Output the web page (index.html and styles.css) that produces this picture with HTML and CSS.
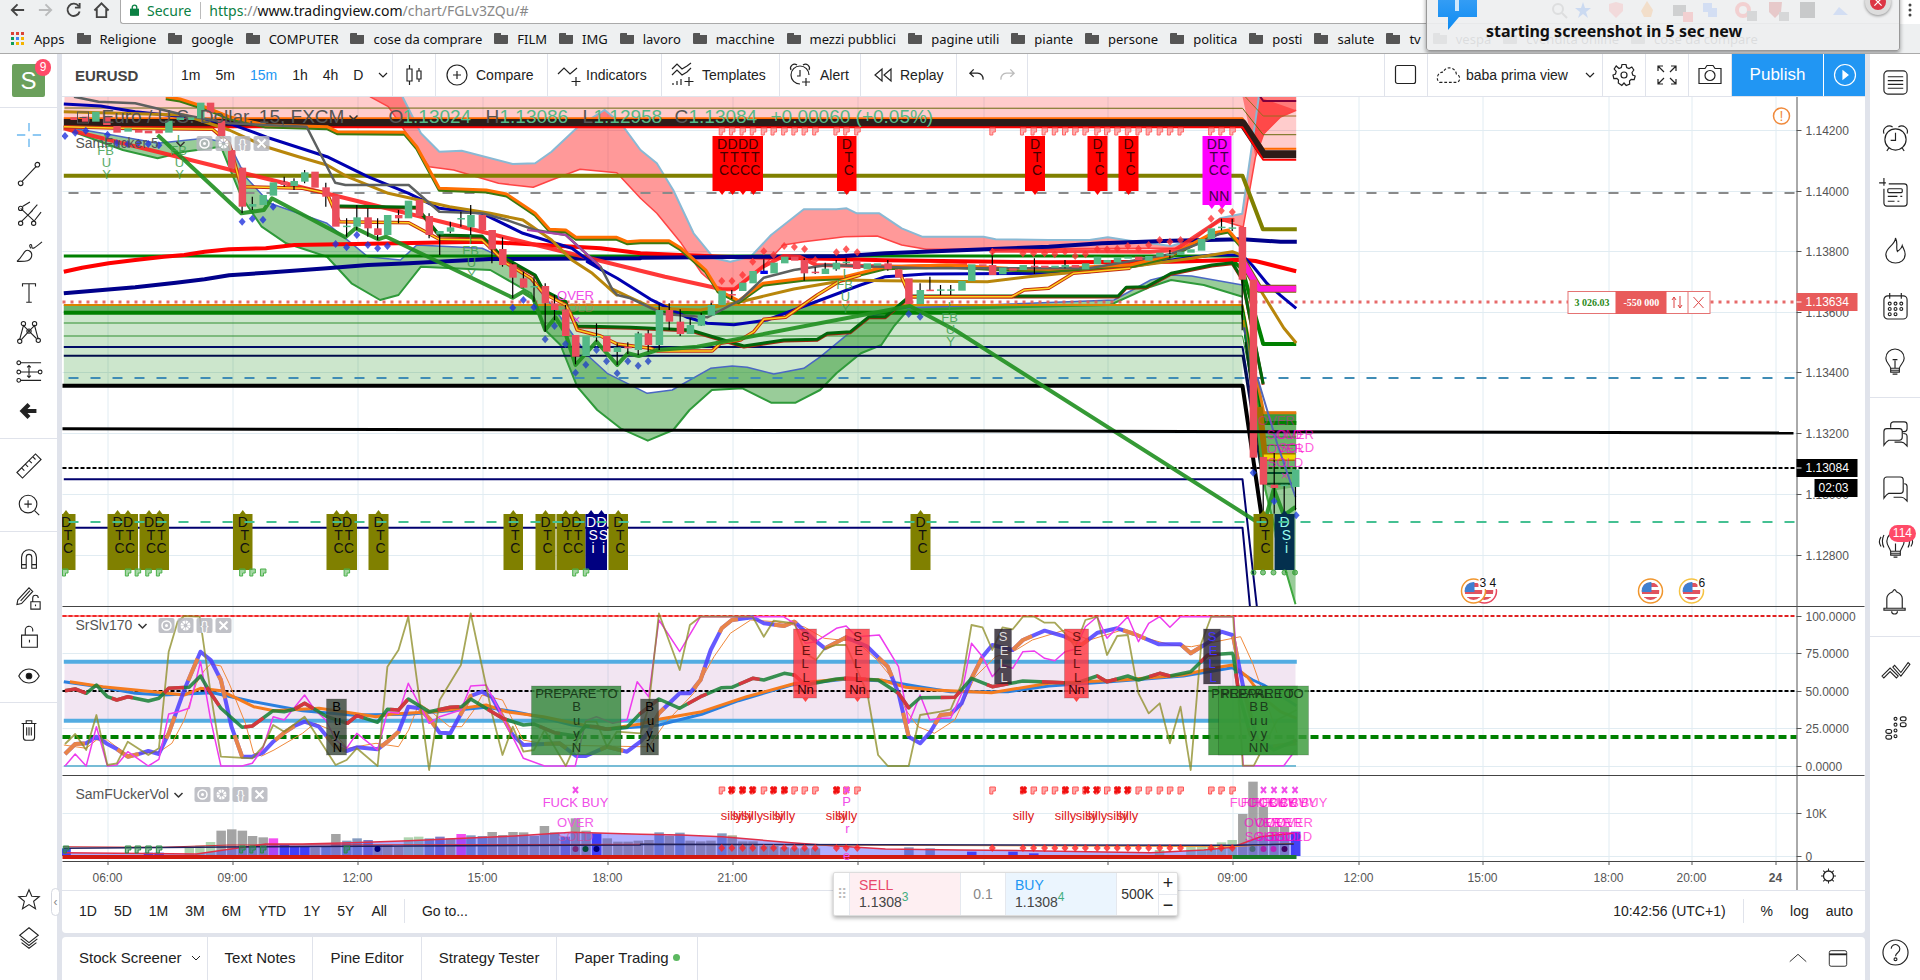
FILE: index.html
```html
<!DOCTYPE html>
<html lang="en">
<head>
<meta charset="utf-8">
<title>EURUSD - TradingView</title>
<link rel="stylesheet" href="styles.css">
</head>
<body>
<div class="app">
  <header class="browser">
    <div class="address-row">
      <nav class="nav-icons" aria-label="Browser">
        <button aria-label="Back"><svg viewBox="0 0 18 18"><path d="M16 9H3M9 3L3 9l6 6"/></svg></button>
        <button aria-label="Forward" class="dim"><svg viewBox="0 0 18 18"><path d="M2 9h13M9 3l6 6-6 6"/></svg></button>
        <button aria-label="Reload"><svg viewBox="0 0 18 18"><path d="M14.500 5A6.500 6.500 0 1 0 15.500 10.500M15.500 1.500V6.500H10.500"/></svg></button>
        <button aria-label="Home"><svg viewBox="0 0 18 18"><path d="M1.500 9.500L9 2l7.500 7.500M4 8v8.500h10V8"/></svg></button>
      </nav>
      <div class="address">
        <svg class="lock" viewBox="0 0 10 13"><path d="M0 5h10v8H0z" fill="#0b8043"/><path d="M2.500 6V3.500a2.500 2.500 0 0 1 5 0V6" fill="none" stroke="#0b8043" stroke-width="1.500"/></svg>
        <span class="secure">Secure</span>
        <a class="url" href="#"><span class="green">https</span>://<b>www.tradingview.com</b>/chart/FGLv3ZQu/#</a>
      </div>
      <span class="more"><svg viewBox="0 0 4 16"><circle cx="2" cy="2" r="1.500"/><circle cx="2" cy="7" r="1.500"/><circle cx="2" cy="12" r="1.500"/></svg></span>
    </div>
    <nav class="bookmarks" aria-label="Bookmarks">
      <a href="#"><svg class="apps" viewBox="0 0 14 14"><path fill="#db4437" d="M0 0h3v3H0zM5 0h3v3H5zM10 0h3v3h-3z"/><path fill="#0f9d58" d="M0 5h3v3H0zM0 10h3v3H0z"/><path fill="#4285f4" d="M5 5h3v3H5z"/><path fill="#f4b400" d="M10 5h3v3h-3zM5 10h3v3H5zM10 10h3v3h-3z"/></svg>Apps</a>
      <a href="#"><i class="folder"></i>Religione</a>
      <a href="#"><i class="folder"></i>google</a>
      <a href="#"><i class="folder"></i>COMPUTER</a>
      <a href="#"><i class="folder"></i>cose da comprare</a>
      <a href="#"><i class="folder"></i>FILM</a>
      <a href="#"><i class="folder"></i>IMG</a>
      <a href="#"><i class="folder"></i>lavoro</a>
      <a href="#"><i class="folder"></i>macchine</a>
      <a href="#"><i class="folder"></i>mezzi pubblici</a>
      <a href="#"><i class="folder"></i>pagine utili</a>
      <a href="#"><i class="folder"></i>piante</a>
      <a href="#"><i class="folder"></i>persone</a>
      <a href="#"><i class="folder"></i>politica</a>
      <a href="#"><i class="folder"></i>posti</a>
      <a href="#"><i class="folder"></i>salute</a>
      <a href="#"><i class="folder"></i>tv</a>
      <a href="#"><i class="folder"></i>vespa</a>
      <a href="#"><i class="folder"></i>cvendita online</a>
      <a href="#"><i class="folder"></i>cose da compare</a>
    </nav>
    <aside class="notice">
      <svg class="bubble" viewBox="0 0 40 36"><defs><linearGradient id="bub" x1="0" y1="0" x2="0" y2="1"><stop offset="0" stop-color="#3ba0f5"/><stop offset="1" stop-color="#0d8bf2"/></linearGradient></defs><path d="M0 0H39V23H21L10 36V23H0Z" fill="url(#bub)"/><path d="M17 3h4v14h-4z" fill="#cfe8fc"/></svg>
      <strong>starting screenshot in 5 sec new</strong>
      <svg class="ext" viewBox="0 0 300 22"><g fill="none" stroke-width="2"><circle cx="7" cy="8" r="5" stroke="#999"/><path d="M11 12l5 5" stroke="#999"/></g><path d="M32 1l2 6h6l-5 4 2 6-5-4-5 4 2-6-5-4h6z" fill="#4285f4"/><path d="M58 3l7-2 7 2v7l-7 7-7-7z" fill="#f88"/><path d="M96 0l6 9-2 7h-7l-3-6z" fill="#f93"/><path d="M122 4h13v11h-13z" fill="#555"/><path d="M132 11h10v10h-10z" fill="#f55"/><path d="M152 2h9v9h-9zM157 7h9v9h-9z" fill="#69f"/><circle cx="192" cy="9" r="6" fill="none" stroke="#f55" stroke-width="4"/><path d="M196 10h10v10h-10z" fill="#777"/><path d="M218 1h13l-1 10-6 6-6-6z" fill="#c33"/><path d="M228 11h10v9h-10z" fill="#777"/><path d="M249 1h15v16h-15z" fill="#333"/><path d="M282 14l6-8 9 8z" fill="#69f"/></svg>
      <button class="close" aria-label="Close notification"><svg viewBox="0 0 10 10"><path d="M2 2l6 6M8 2l-6 6"/></svg></button>
    </aside>
  </header>

  <div class="workspace">
    <aside class="tools left">
      <div class="account"><button class="avatar">S</button><span class="badge">9</span></div>
      <div class="group main-tools">
        <button aria-label="Cross" class="cross"><svg viewBox="0 0 28 28"><path d="M14 1v9M14 18v9M1 14h9M18 14h9"/></svg></button>
        <button aria-label="Trend line"><svg viewBox="0 0 28 28"><path d="M6.500 22L21.500 6"/><circle cx="5" cy="24" r="2.500"/><circle cx="23" cy="4" r="2.500"/></svg></button>
        <button aria-label="Pitchfork"><svg viewBox="0 0 28 28"><path d="M5 8L20 22M7 6L15 1M6 22L18 10M20 21l7-9M14 14l9-10"/><circle cx="5" cy="8" r="2.300"/><circle cx="5" cy="24" r="2.300"/><circle cx="19" cy="24" r="2.300"/></svg></button>
        <button aria-label="Brush"><svg viewBox="0 0 28 28"><path d="M1 23C8 23 17 24 17 16C17 12 12 9 9 13C7 16 5 20 1 23M16 9c-3-4 1-6 1-2c0 4 4 1 11-5"/></svg></button>
        <button aria-label="Text"><svg viewBox="0 0 28 28"><path d="M7 7V4H21V7M14 4V24M11 24H17"/></svg></button>
        <button aria-label="Pattern"><svg viewBox="0 0 28 28"><path d="M4 22L8 7L14 13L20 7L24 22M14 13L6 22M14 13l8 8"/><circle cx="8" cy="5" r="2.300"/><circle cx="20" cy="5" r="2.300"/><circle cx="14" cy="13" r="2.300"/><circle cx="4" cy="24" r="2.300"/><circle cx="24" cy="23" r="2.300"/></svg></button>
        <button aria-label="Prediction"><svg viewBox="0 0 28 28"><path d="M5 4H27M5 14H24M5 23H27M14 7V20M12 9l2-2 2 2M12 18l2 2 2-2"/><circle cx="3" cy="4" r="2"/><circle cx="3" cy="14" r="2"/><circle cx="26" cy="14" r="2"/><circle cx="3" cy="23" r="2"/></svg></button>
        <button aria-label="Back"><svg viewBox="0 0 28 28"><path d="M22 14H8M14 7l-7 7 7 7" stroke-width="4.500"/></svg></button>
      </div>
      <div class="group">
        <button aria-label="Measure"><svg viewBox="0 0 28 28"><path d="M1 21L21 1l6 6L7 27ZM6 16l3 3M10 12l3 3M14 8l3 3M18 4l3 3"/></svg></button>
        <button aria-label="Zoom in"><svg viewBox="0 0 28 28"><circle cx="13" cy="13" r="9.500"/><path d="M20 20l5 5M13 9v8M9 13h8"/></svg></button>
      </div>
      <div class="group">
        <button aria-label="Magnet"><svg viewBox="0 0 28 28"><path d="M6 24V12a8 8 0 0 1 16 0V24H17V12a3 3 0 0 0-6 0V24ZM6 20h5M17 20h5"/></svg></button>
        <button aria-label="Stay in drawing mode"><svg viewBox="0 0 28 28"><path d="M2 16L14 3l4 4L6 20l-5 1ZM5 17L15 6M16 18h10v8H16ZM18 18v-4a3 3 0 0 1 6 0M21 21v2"/></svg></button>
        <button aria-label="Lock drawings"><svg viewBox="0 0 28 28"><path d="M6 12H23V25H6ZM10 12V7a4 4 0 0 1 8-1V8M14.500 17v3"/></svg></button>
        <button aria-label="Hide drawings"><svg viewBox="0 0 28 28"><path d="M3 14C8 4 20 4 25 14C20 24 8 24 3 14Z"/><circle cx="14" cy="14" r="3" fill="#111"/></svg></button>
      </div>
      <div class="group last">
        <button aria-label="Remove"><svg viewBox="0 0 28 28"><path d="M6 7H22M11 7V4h6v3M8 7V22a3 3 0 0 0 3 3h6a3 3 0 0 0 3-3V7M11.500 11v9M14 11v9M16.500 11v9"/></svg></button>
      </div>
      <div class="group bottom-tools">
        <button aria-label="Favorites"><svg viewBox="0 0 28 28"><path d="M14 4l3 7 8 .5-6 5 2 8-7-4.500-7 4.500 2-8-6-5 8-.5Z"/></svg></button>
        <button aria-label="Object tree"><svg viewBox="0 0 28 28"><path d="M14 3l10 8-10 8L4 11ZM5 15l9 7 9-7M6 19l8 6 8-6"/></svg></button>
      </div>
      <button class="handle" aria-label="Collapse toolbar">‹</button>
    </aside>

    <main class="center">
      <div class="topbar">
        <button class="cell symbol">EURUSD</button>
        <div class="cell intervals">
          <button>1m</button><button>5m</button><button class="active">15m</button><button>1h</button><button>4h</button><button>D</button>
          <button class="chev" aria-label="More intervals"><svg viewBox="0 0 10 6"><path d="M1 1l4 4 4-4"/></svg></button>
        </div>
        <button class="cell style" aria-label="Chart type"><svg viewBox="0 0 18 24"><path d="M2 6h5v12H2ZM4.500 2v4M4.500 18v4M12 8h4v8h-4ZM14 5v3M14 16v3"/></svg></button>
        <button class="cell compare"><svg viewBox="0 0 24 24"><circle cx="12" cy="12" r="10"/><path d="M12 8v8M8 12h8"/></svg>Compare</button>
        <button class="cell indicators"><svg viewBox="0 0 24 24"><path d="M1 11l6-6 6 6 7-6M19 14v9M14.500 18.500h9"/></svg>Indicators</button>
        <button class="cell templates"><svg viewBox="0 0 24 24"><path d="M1 6l5-5 5 5 5-3 4-3M1 12l5-5 5 5 5-3 4-4M2 22v-2M6 22v-4M10 22v-6M18 14v9M13.500 18.500h9"/></svg>Templates</button>
        <button class="cell alert"><svg viewBox="0 0 24 24"><path d="M20 12a9 9 0 1 0-9 9M11 7v6H8M17 15v8M13 19h8M2 7a4 4 0 0 1 6-5M14 2a4 4 0 0 1 6 5"/></svg>Alert</button>
        <button class="cell replay"><svg viewBox="0 0 20 20"><path d="M9 4v12L2 10ZM18 4v12l-7-6Z"/></svg>Replay</button>
        <div class="cell history">
          <button aria-label="Undo"><svg viewBox="0 0 16 16"><path d="M5 2L1 6l4 4M1 6h8a6 6 0 0 1 6 7"/></svg></button>
          <button aria-label="Redo" class="dim"><svg viewBox="0 0 16 16"><path d="M11 2l4 4-4 4M15 6H7a6 6 0 0 0-6 7"/></svg></button>
        </div>
        <span class="grow"></span>
        <button class="cell square" aria-label="Layout"><svg viewBox="0 0 24 24"><rect x="1.500" y="2.500" width="20" height="18" rx="2"/></svg></button>
        <button class="cell saved"><svg viewBox="0 0 28 24"><path d="M5 20H24C28 18 27 12 23 11C22 3 11 2 9 9C3 8 0 17 5 20Z" stroke-dasharray="3 2"/></svg><span>baba prima view</span><svg class="chevron" viewBox="0 0 10 6"><path d="M1 1l4 4 4-4"/></svg></button>
        <button class="cell square" aria-label="Settings"><svg viewBox="0 0 24 24"><circle cx="12" cy="12" r="3"/><path d="M10 1.500h4l.7 3 2.300 1 2.800-1.500 2 3-1.800 2.500.7 2.500 2.500 1-1 3.500-3-.2-1.700 1.700.2 3-3.500 1.500-2.200-2.500-2.200 2.500L6.300 20l.2-3-1.700-1.700-3 .2-.8-3.500 2.500-1L4.200 8.500 2.200 6l2-3L7 5.500l2.300-1Z"/></svg></button>
        <button class="cell square" aria-label="Fullscreen"><svg viewBox="0 0 24 24"><path d="M3 8V3h5M3 3l6 6M16 3h5v5M21 3l-6 6M3 16v5h5M3 21l6-6M21 16v5h-5M21 21l-6-6"/></svg></button>
        <button class="cell square" aria-label="Snapshot"><svg viewBox="0 0 24 24"><path d="M1 5.500h6l2-3h6l2 3h6v15H1Z"/><circle cx="12" cy="12.500" r="5"/></svg></button>
        <button class="publish">Publish</button>
        <button class="play" aria-label="Start streaming"><svg viewBox="0 0 24 24"><circle cx="12" cy="12" r="10.500"/><path d="M10 8l5 4-5 4Z" fill="#fff"/></svg></button>
      </div>

      <div class="chart"><svg id="chart" viewBox="62 97 1802 793" role="img" aria-label="EURUSD 15 minute chart"></svg></div>

      <div class="rangebar">
        <button>1D</button><button>5D</button><button>1M</button><button>3M</button><button>6M</button><button>YTD</button><button>1Y</button><button>5Y</button><button>All</button>
        <i class="rule"></i><button class="goto">Go to...</button>
        <span class="grow"></span>
        <button>10:42:56 (UTC+1)</button><i class="rule"></i><button>%</button><button>log</button><button>auto</button>
        <div class="order">
          <span class="drag">⠿</span>
          <button class="sell"><b>SELL</b><span>1.1308<sup>3</sup></span></button>
          <span class="spread">0.1</span>
          <button class="buy"><b>BUY</b><span>1.1308<sup>4</sup></span></button>
          <span class="qty">500K</span>
          <span class="steps"><button aria-label="Increase">+</button><button aria-label="Decrease">−</button></span>
        </div>
      </div>

      <div class="tabs">
        <button>Stock Screener<svg class="chevron" viewBox="0 0 10 6"><path d="M1 1l4 4 4-4"/></svg></button><button>Text Notes</button><button>Pine Editor</button><button>Strategy Tester</button><button>Paper Trading<i class="dot"></i></button>
        <span class="grow"></span>
        <button class="icon" aria-label="Expand"><svg viewBox="0 0 24 24"><path d="M3 16l9-8 9 8"/></svg></button>
        <button class="icon" aria-label="Maximize"><svg viewBox="0 0 24 24"><rect x="2.500" y="4" width="19" height="17" rx="2"/><path d="M2.500 8h19" stroke-width="2"/></svg></button>
      </div>
    </main>

    <aside class="tools right">
      <div class="group first">
        <button aria-label="Watchlist"><svg viewBox="0 0 28 28"><rect x="2" y="2" width="24" height="24" rx="4"/><path d="M6 8h16M6 12h16M6 16h16M6 20h16"/></svg></button>
        <button aria-label="Alerts"><svg viewBox="0 0 28 28"><circle cx="14" cy="15" r="11"/><path d="M14 8v8H9M2 9a6 6 0 0 1 9-7M17 2a6 6 0 0 1 9 7M7 24l-2 3M21 24l2 3"/></svg></button>
        <button aria-label="Data window"><svg viewBox="0 0 28 28"><path d="M7 3H23a3 3 0 0 1 3 3V23a3 3 0 0 1-3 3H5a3 3 0 0 1-3-3V8M-3 2H4M2-3V5"/><rect x="6" y="8" width="15" height="4" rx="1"/><path d="M6 16h10M19 16h2M6 21h7M16 21h2"/></svg></button>
        <button aria-label="Hotlist"><svg viewBox="0 0 28 28"><path d="M14 1C14 8 4 11 4 18c0 12 20 12 20 0c0-4-2-6-3-9c-1 4-3 4-5 6C14 11 17 7 14 1Z"/></svg></button>
        <button aria-label="Calendar"><svg viewBox="0 0 28 28"><rect x="2" y="3" width="24" height="24" rx="4"/><path d="M8 0v6M20 0v6"/><circle cx="8" cy="11" r="1.500"/><circle cx="14" cy="11" r="1.500"/><circle cx="20" cy="11" r="1.500"/><circle cx="8" cy="16.500" r="1.500"/><circle cx="14" cy="16.500" r="1.500"/><circle cx="20" cy="16.500" r="1.500"/><circle cx="8" cy="22" r="1.500"/><circle cx="14" cy="22" r="1.500"/></svg></button>
        <button aria-label="My ideas"><svg viewBox="0 0 28 28"><path d="M9 20C8 16 4 14 4 9.500a9.500 9.500 0 0 1 19 0C23 14 19 16 18 20ZM9 20v4h9v-4M9 22h9M11 26h5M13.500 20v-8M11 11h5"/></svg></button>
      </div>
      <div class="group">
        <button aria-label="Public chats"><svg viewBox="0 0 28 28"><path d="M5 9H18a3 3 0 0 1 3 3v6a3 3 0 0 1-3 3H7c-2 1-3 2-5 5V12a3 3 0 0 1 3-3ZM9 8V5a3 3 0 0 1 3-3H23a3 3 0 0 1 3 3V9a3 3 0 0 1-3 3H21M22 14c3 0 4 1 4 3V27c-2-2-3-4-6-4H13"/></svg></button>
        <button aria-label="Private chats"><svg viewBox="0 0 28 28"><path d="M5 1H19a3 3 0 0 1 3 3V15a3 3 0 0 1-3 3H7c-2 1-3 2-5 5V4a3 3 0 0 1 3-3ZM23 8c2 0 3 1 3 3V26c-2-2-3-4-6-4H12"/></svg></button>
        <button aria-label="Ideas stream"><svg viewBox="0 0 28 28"><path d="M9 20C8 16 5 14 5 9.500a9 9 0 0 1 18 0C23 14 20 16 19 20ZM9 20v4h10v-4M9 22h10M12 26h4M14 20v-8M2 3c-2 4-2 9 0 13M-1 5c-2 3-2 7 0 10M27 3c2 4 2 9 0 13M30 5c2 3 2 7 0 10"/></svg><span class="badge">114</span></button>
        <button aria-label="Notifications"><svg viewBox="0 0 28 28"><path d="M2 21h22v2H2ZM5 21V11C5 6 9 5 11 4c1-3 3-3 4 0c2 1 6 2 6 7V21M10 24a3 3 0 0 0 6 0"/></svg></button>
      </div>
      <div class="group last">
        <button aria-label="Order panel"><svg viewBox="0 0 30 28"><path d="M0 18l9-9 9 9-2 2-7-7-7 7ZM12 8l2-2 7 8 8-11 2 2-10 13Z"/></svg></button>
        <button aria-label="DOM"><svg viewBox="0 0 28 28"><circle cx="14" cy="4" r="1.500"/><circle cx="14" cy="10" r="1.500"/><circle cx="14" cy="16" r="1.500"/><circle cx="14" cy="22" r="1.500"/><rect x="19" y="2" width="6" height="4" rx="2"/><rect x="19" y="8" width="6" height="4" rx="2"/><rect x="4" y="15" width="6" height="4" rx="2"/><rect x="4" y="21" width="6" height="4" rx="2"/></svg></button>
      </div>
      <div class="group help">
        <button aria-label="Help"><svg viewBox="0 0 28 28"><circle cx="14" cy="14" r="13"/><path d="M9.500 10a4.500 4.500 0 1 1 7 4c-2 1.500-2.500 2-2.500 4"/><circle cx="14" cy="21" r="1.500"/></svg></button>
      </div>
    </aside>
  </div>
</div>
<script src="chart.js"></script>
</body>
</html>
```
FILE: styles.css
```css
* { box-sizing: border-box; }
html, body { height: 100%; }
body { margin: 0; overflow: hidden; background: #fff; color: #222; font: 14px "Liberation Sans", Arial, sans-serif; }
button { margin: 0; padding: 0; border: 0; background: none; color: inherit; font: inherit; cursor: pointer; }
a { color: inherit; text-decoration: none; }
svg { display: block; fill: none; stroke: #222; stroke-width: 1; overflow: visible; }
.grow { flex: 1; }
.dim { opacity: .3; }
.app { display: flex; flex-direction: column; height: 100%; }

.browser { position: relative; flex: none; height: 54px; border-bottom: 1px solid #aaa; background: #eef0f1; font-family: "Noto Sans", "Open Sans", sans-serif; color: #111; overflow: hidden; }
.address-row { display: flex; height: 24px; }
.nav-icons { display: flex; align-items: flex-start; gap: 11px; width: 120px; padding: 1px 0 0 9px; }
.nav-icons svg { width: 17px; height: 18px; stroke: #444; stroke-width: 2; }
.address { display: flex; flex: 1; align-items: center; gap: 8px; padding: 0 9px 3px; border-left: 1px solid #aaa; border-bottom: 1px solid #aaa; border-radius: 0 0 0 3px; background: #fff; font-size: 14px; white-space: nowrap; }
.lock { width: 9px; height: 12px; stroke: none; }
.secure { padding-right: 9px; border-right: 1px solid #bbb; color: #0b8043; line-height: 17px; }
.url { color: #888; }
.url b { color: #111; font-weight: 400; }
.url .green { color: #0b8043; }
.more { width: 20px; padding: 3px 8px; background: #fff; }
.more svg { width: 4px; height: 16px; fill: #444; stroke: none; }
.bookmarks { display: flex; align-items: center; gap: 12px; height: 29px; padding-left: 11px; font-size: 13px; white-space: nowrap; }
.bookmarks a { display: flex; align-items: center; gap: 9px; }
.apps { width: 14px; height: 14px; stroke: none; }
.folder { width: 14px; height: 11px; border-radius: 1px; background: linear-gradient(100deg, #555 50%, #fff0 52%) 0 0 / 14px 2px no-repeat, linear-gradient(#555, #555) 0 2px / 14px 9px no-repeat; }
.notice { position: absolute; top: -10px; right: 20px; width: 474px; height: 61px; border: 1px solid #999; border-radius: 3px; background: #eeeff0ea; box-shadow: 0 2px 4px #0006; }
.notice strong { position: absolute; left: 59px; top: 29px; font-size: 16px; line-height: 22px; white-space: nowrap; }
.bubble { position: absolute; left: 11px; top: 3px; width: 40px; height: 36px; stroke: none; }
.ext { position: absolute; left: 124px; top: 10px; width: 300px; height: 22px; stroke: none; opacity: .2; }
.close { position: absolute; right: 8px; top: -2px; display: grid; place-items: center; width: 26px; height: 26px; border: 5px solid #ddd; border-radius: 50%; background: #dc3545; box-shadow: 0 1px 3px #0006; }
.close svg { width: 12px; height: 12px; stroke: #fff; }

.workspace { display: flex; flex: 1; min-height: 0; background: #e0e3eb; gap: 5px; }
.tools { position: relative; display: flex; flex: none; flex-direction: column; background: #fff; }
.tools.left { width: 57px; }
.tools.right { width: 50px; }
.tools .group { display: grid; padding: 7px 0; border-bottom: 1px solid #e0e3eb; }
.tools .last, .tools .bottom-tools, .tools .help { border: 0; }
.tools button { position: relative; display: grid; place-items: center; }
.tools svg { stroke-width: 1.2; }
.left .group { grid-auto-rows: 39px; }
.left svg { width: 26px; height: 26px; }
.left .main-tools { height: 331px; grid-auto-rows: 1fr; }
.left .cross svg { stroke: #6bb8f0; stroke-width: 1.5; }
.left .bottom-tools, .right .help { margin-top: auto; }
.left .bottom-tools { padding-bottom: 23px; }
.right .group { grid-auto-rows: 56px; }
.right .first { padding-top: 0; }
.right .help { padding: 0; }
.right svg { width: 27px; height: 27px; }
.account { position: relative; height: 54px; padding: 10px 12px; border-bottom: 1px solid #e0e3eb; }
.avatar { width: 33px; height: 33px; border-radius: 2px; background: #6ba05c; color: #fff; font-size: 24px; }
.badge { position: absolute; right: 6px; top: 5px; min-width: 16px; padding: 0 4px; border-radius: 9px; background: #ff4a68; color: #fff; font-size: 12px; line-height: 17px; text-align: center; }
.right .badge { right: 4px; top: 8px; }
.tools .handle { position: absolute; right: -3px; bottom: 64px; width: 9px; height: 28px; border: 1px solid #d5d8e0; border-radius: 5px; background: #fff; font-size: 12px; color: #888; }

.center { display: flex; flex: 1; flex-direction: column; min-width: 0; }
.topbar { display: flex; flex: none; height: 43px; border-bottom: 1px solid #e0e3eb; background: #fff; }
.topbar svg { width: 24px; height: 24px; stroke-width: 1.2; }
.cell { display: flex; align-items: center; gap: 7px; padding: 0 12px; border-right: 1px solid #e0e3eb; white-space: nowrap; }
.topbar .symbol { width: 111px; padding: 0 13px; font-size: 15px; font-weight: 700; color: #444; }
.intervals { width: 220px; padding: 0 8px; gap: 15px; }
.intervals .active { color: #2196f3; }
.topbar .chev svg, svg.chevron, .topbar svg.chevron { width: 10px; height: 6px; }
.style { width: 43px; }
.topbar .style svg { width: 18px; }
.compare { width: 112px; padding: 0 9px; }
.indicators { width: 114px; padding: 0 9px; gap: 5px; }
.templates { width: 118px; padding: 0 9px; }
.alert { width: 81px; padding: 0 9px; }
.replay { width: 96px; padding: 0 12px; }
.topbar .replay svg { width: 20px; height: 20px; }
.history { width: 71px; gap: 16px; }
.topbar .history svg { width: 15px; height: 16px; stroke-width: 1.5; }
.square { width: 43px; padding: 0 9px; }
.topbar .grow { border-right: 1px solid #e0e3eb; }
.saved { width: 175px; padding: 0 7px; gap: 5px; }
.saved span { flex: 1; text-align: left; }
.topbar .saved svg:first-child { width: 26px; }
.publish { width: 92px; border-right: 1px solid #fff; background: #2196f3; color: #fff; font-size: 17px; }
.play { display: grid; place-items: center; width: 41px; background: #2196f3; }
.topbar .play svg { stroke: #fff; }

.chart { flex: 1; min-height: 0; background: #fff; overflow: hidden; }
#chart { width: 100%; height: 100%; font: 13px "Liberation Sans", Arial, sans-serif; overflow: hidden; }
#chart text { stroke: none; white-space: pre; }

.rangebar { position: relative; display: flex; flex: none; align-items: center; gap: 17px; height: 43px; padding: 0 12px 2px 17px; border-top: 1px solid #e0e3eb; border-radius: 0 0 4px 4px; background: #fff; white-space: nowrap; }
.rule { width: 1px; height: 24px; background: #e0e3eb; }
.order { position: absolute; left: 771px; top: -19px; display: flex; width: 345px; height: 44px; border: 1px solid #ddd; border-radius: 2px; background: #fff; box-shadow: 0 2px 4px #0005; }
.order > * { display: grid; align-content: center; border-right: 1px solid #e5e8ee; }
.drag { width: 16px; justify-items: center; color: #bbb; }
.sell, .buy { width: 111px; padding: 0 9px; line-height: 17px; text-align: left; color: #444; }
.sell { background: #feeff2; }
.buy { background: #ebf5fe; }
.order b { font-weight: 400; color: #e8486b; }
.order .buy b { color: #2196f3; }
.order sup { color: #3fae7e; font-size: 12px; line-height: 0; vertical-align: 6px; }
.spread { width: 45px; justify-items: center; color: #888; }
.qty { width: 42px; justify-items: center; color: #333; }
.steps { flex: 1; align-content: stretch; border: 0; }
.steps button { font-size: 18px; line-height: 20px; }
.steps button + button { border-top: 1px solid #e5e8ee; }

.tabs { display: flex; flex: none; height: 43px; margin-top: 4px; border-radius: 4px 4px 0 0; background: #fff; font-size: 15px; white-space: nowrap; }
.tabs button { display: flex; align-items: center; gap: 9px; padding: 0 17px 2px; border-right: 1px solid #e0e3eb; }
.tabs button:first-child { padding-right: 6px; }
.tabs .dot { width: 7px; height: 7px; margin-left: -5px; border-radius: 50%; background: #5cb860; }
.tabs .icon { width: 40px; padding: 0 9px 2px; border: 0; }
.tabs .icon:last-child { margin-right: 7px; }
.tabs .icon svg { width: 22px; height: 22px; }
```
FILE: chart.js
```js
const svg = document.getElementById('chart');
const NS = 'http://www.w3.org/2000/svg';

// Survey sheets the series were digitised on: origin x, origin y, units per px.
const SHEETS = {
  A: [0, 0, 2.45, 3], B: [640, 0, 2.45, 3], C: [1280, 0, 2.45, 3],
  D: [0, 330, 2.45, 3], E: [640, 330, 2.45, 3], F: [1280, 330, 2.45, 3],
  G: [0, 600, 2.45, 3], H: [640, 600, 2.45, 3], I: [1280, 600, 2.45, 3],
  J: [1200, 97, 3, 3], K: [540, 230, 3, 3], M: [1180, 610, 3, 3], P: [0, 0, 1, 1]
};
const at = (s, x, y) => {
  const [ox, oy, sx, sy] = SHEETS[s];
  return [ox + x / sx, oy + y / sy];
};
function pts(str) {
  let s = 'P';
  return str.trim().split(/\s+/).reduce((out, t) => {
    if (SHEETS[t]) { s = t; return out; }
    const [x, y] = t.split(',').map(Number);
    out.push(at(s, x, y).map(v => Math.round(v * 10) / 10));
    return out;
  }, []);
}
function el(name, attrs, text) {
  const e = document.createElementNS(NS, name);
  for (const k in attrs) e.setAttribute(k, attrs[k]);
  if (text !== undefined) e.textContent = text;
  svg.appendChild(e);
  return e;
}
const line = (str, stroke, w = 1, o = 1, dash = '', dy = 0) => el('polyline', {
  points: pts(str).map(p => p[0] + ',' + (p[1] + dy)).join(' '), fill: 'none', stroke,
  'stroke-width': w, opacity: o, 'stroke-dasharray': dash, 'stroke-linejoin': 'round'
});
const area = (top, bottom, fill) => el('polygon', {
  points: pts(top).concat(pts(bottom).reverse()).join(' '), fill, stroke: 'none'
});
const rect = (x, y, w, h, fill, o = 1) => el('rect', { x, y, width: w, height: h, fill, stroke: 'none', opacity: o });
const text = (x, y, s, fill = '#555', size = 13, anchor = 'start', o = 1) =>
  el('text', { x, y, fill, 'font-size': size, 'text-anchor': anchor, opacity: o }, s);
const diamond = (x, y, fill, o = 0.8) => el('path', { d: `M${x} ${y - 4}l3.5 4-3.5 4-3.5-4z`, fill, stroke: 'none', opacity: o });

// Grid
const hours = [[107, '06:00'], [232, '09:00'], [357, '12:00'], [482, '15:00'], [607, '18:00'], [732, '21:00'], [857, ''], [983, ''], [1107, ''], [1232, '09:00'], [1358, '12:00'], [1482, '15:00'], [1608, '18:00'], [1691, '20:00'], [1775, '24']];
hours.forEach(([x]) => line(`${x}.5,97 ${x}.5,861`, '#e1ecf2'));
[130, 191, 251, 312, 372, 433, 494, 555, 653, 691, 728, 766, 813, 856].forEach(y => line(`62,${y}.5 1796,${y}.5`, '#e1ecf2'));

// Resistance and support zones
area('P 64,97 J 287,0', 'A 155,365 B 1475,365 J 188,165 287,165', '#ff000033');
area('B 1475,290 J 170,0 287,0', 'B 1475,290 J 165,180 190,110 240,60 287,40', '#ff000066');
area('A 155,915 B 1475,915', 'D 155,167 E 1475,167', '#00800033');
area('A 155,915 B 1475,915 J 188,947 287,947', 'A 155,938 B 1475,938 J 188,978 287,978', '#0080007a');

// Bollinger envelopes
const upTop = 'A 985,290 1030,400 1075,455 1130,452 1255,492 1310,490 1350,455 1415,380 1480,330 1520,370 B 0,450 40,490 80,570 130,700 180,775 220,785 270,770 320,705 400,628 480,628 505,625 530,640 585,640 640,685 690,710 840,710 870,718 1000,720 1100,720 1145,712 1200,722 1300,738 1350,720 1420,655 J 125,350 175,0';
const upLow = 'A 905,290 950,320 1000,410 1050,500 1110,510 1220,550 1305,562 1350,540 1420,508 1510,518 B 0,595 40,640 100,730 150,820 195,868 235,868 300,800 350,735 400,725 500,710 580,708 640,735 700,748 1250,745 1330,745 1420,660 J 128,390 165,180 190,110 240,60 287,40';
area(upTop, upLow, '#ff000066');
line(upTop, '#89b9d4', 2); line(upLow, '#f44', 1.5);
const loTop = 'A 155,380 250,400 385,430 500,415 560,430 600,530 660,610 800,670 900,770 980,780 1020,735 1180,745 1260,790 1300,840 K 45,240 80,290 140,375 200,430 320,490 395,480 510,415 575,408 620,412 700,432 790,415 840,380 B 560,950 640,925 1160,900 1250,840 1300,825 1350,828 1475,855';
const loLow = 'A 155,385 300,450 385,475 450,455 540,440 590,590 640,680 700,730 800,770 860,850 930,900 975,885 1030,800 1200,810 1300,880 K 14,300 60,345 110,470 170,540 240,595 E 18,332 80,300 120,240 175,180 250,175 320,218 380,218 440,180 480,130 540,70 590,45 620,-10 B 655,930 1150,915 1250,860 1300,840 1380,855 1475,890';
area(loTop, loLow, '#00800066');
line(loTop, '#4a67c4', 1.5); line(loLow, '#2f9a3a', 2);

// Horizontal levels with their drop on the last bars
line('P 64,108 B 1475,325 J 188,113 287,113', '#6b6b10', 1);
line('J 135,0 188,57 287,57', '#9a6b20', 1);
line('J 160,-30 188,12 287,12', '#80003c', 2);
line('A 155,355 B 1475,355 J 188,155 287,155', '#ff6a00', 2);
line('A 155,369 B 1475,369 J 188,172 287,172', '#2d1b18', 8);
line('A 155,382 B 1475,382 J 188,188 287,188', '#f00', 2);
line('A 155,527 B 1475,527 1525,688 C 40,688', '#808000', 4);
line('A 155,768 B 1475,768', '#008000', 3);
line('J 100,495 125,515 188,741 287,741', '#008000', 4);
line('A 155,915 B 1475,915 J 188,947 287,947', '#d98200', 2);
line('A 155,938 B 1475,938 J 188,978 287,978', '#008000', 4);
line('A 155,969 B 1475,969 J 188,1020 287,1020', '#2f8f2f', 1);
line('D 155,18 E 1475,18 J 188,1045 287,1045', '#2f8f2f', 1);
line('D 155,51 E 1475,51 J 188,1128 287,1128', '#000c66', 2);
line('D 155,77 E 1475,77 J 188,1160 287,1160', '#000c4a', 2);
line('D 152,167 E 1475,167 J 182,1250', '#000', 4);
line('D 155,448 E 1475,448 1510,828', '#00006e', 2);
line('D 155,593 E 1475,593 1493,828', '#00006e', 2);
line('P 62,193 1796,193', '#8a8a8a', 2, 1, '10 12').setAttribute('stroke-dashoffset', '-6');
line('P 62,378 1796,378', '#3f8cb5', 2, 1, '10 12').setAttribute('stroke-dashoffset', '-6');
line('P 62,302 1796,302', '#e35a5a', 3, 0.9, '3 5');
line('P 62,468 1796,468', '#000', 2, 1, '4 2');

// Moving averages
line('A 155,815 200,803 265,790 330,780 400,770 450,765 500,755 560,748 650,745 720,735 870,732 1180,725 1330,735 1470,745 B 0,760 200,770 400,775 600,781 1000,787 1300,785 J 125,488 165,492 287,523', '#f00', 4);
line('A 155,880 330,862 430,848 500,838 560,826 650,818 800,805 900,795 1000,790 1200,777 1568,775 B 0,773 500,768 600,760 800,750 1000,740 1130,730 1300,722 1475,718 C 0,725 40,725', '#00008b', 4);
line('A 155,385 200,400 1568,812 B 60,830 200,868 230,868 300,800 350,768 390,770 430,795 640,800 800,795', '#f22', 4, 0.9);
line('B 860,752 1250,755 1310,750 1370,700 1420,660 1455,660', '#f22', 4, 0.85);
line('A 155,312 245,318 330,335 450,350 560,370 660,415 800,470 900,530 1000,580 1075,625 1180,640 1280,700 1400,745 1480,815 K 140,95 230,145 330,208 440,262 500,280 580,284 680,270 800,225 B 539,855 600,830 700,822 1000,820 1100,815 1200,800 1300,780 1400,765 1450,765 J 125,475 155,505 200,560 240,595 287,634', '#0000b0', 3);
line('A 155,335 450,345 560,390 650,440 730,470 800,495 850,530 950,580 1100,620 1200,640 1280,660 1350,720 1400,780 1450,820 1510,885 K 200,170 260,198 340,235 480,240 600,215 760,177 920,150 B 600,842 850,845 950,830 1100,812 1200,800 1350,775 1450,755 J 125,475 180,580 250,693 287,738', '#b8860b', 3);
const orange = 'A 405,290 440,297 510,325 560,350 650,375 800,380 825,395 990,397 1020,440 1075,565 1190,570 1240,582 1310,640 1345,688 1385,690 1410,712 1510,712 1535,725 B 0,722 70,722 100,745 160,810 190,870 240,902 300,850 400,835 500,830 600,800 750,795 900,805 1000,808 1100,800 1200,795 1300,765 1400,700 1440,690 1475,740';
line(orange, '#3a7a10', 3, 1, '', 2); line(orange, '#ff6f00', 3);
line('A 180,290 240,305 330,310 450,345 560,370 750,380 820,548 845,555 1000,555 1075,635 1180,640 1240,660 1310,690 1385,705 1470,800 1500,870 K 230,195 270,205 370,252 500,262 600,210 670,143 760,120 860,105 B 700,805 1100,805 1300,762 1370,730 1420,700', '#5d6060', 2.5);
line('A 1290,690 1385,705 1470,800', '#a4a', 2);
const dark = 'A 830,618 1020,622 1075,705 1180,708 1230,770 1310,825 1330,870 1385,905 K 85,245 110,288 270,292 450,300 610,348 730,330 830,328 860,310 930,305 B 560,950 600,950 660,888 1170,888 1190,862 1240,860 1300,820 1400,795 1450,788 J 125,545 188,860';
line(dark, '#a02810', 3, 1, '', 1); line(dark, '#00660a', 3);
['A 155,380 300,385 520,388 560,430 590,560 740,565 800,580 830,665 1000,668 1075,718 1180,720 1240,790 1300,835 1330,880 1385,915 K 90,250 110,300 180,318 230,342 330,355 350,363 515,363 540,340 600,330 640,305 670,268 735,262 830,195 900,152 960,135', 'B 632,808 660,890 910,890 940,870 1000,865 1060,820 1200,805'].forEach(s => {
  line(s, '#c33010', 3.5); line(s, '#ffd21e', 1.5);
});
line('J 125,490 175,575 287,575', '#7a6a00', 8); line('J 125,490 175,575 287,575', '#ff1ad9', 6);

// Collapse of the support bands on the right
area('J 165,840 190,947 287,950', 'J 175,1100 222,1320 285,1522', '#00800066');
area('J 170,850 190,947 287,950', 'J 188,1160 225,1180 287,1170', '#00800050');
['#007000', '#2b9a2b', '#b08800', '#404a90', '#007a30', '#003a10'].forEach((c, i) => line(`J ${125 + i * 2},${625 + i * 22} ${178 + i},${930 + i * 35} 190,${980 + i * 34}`, c, 2));
line('J 170,850 190,947 287,947', '#e07a10', 3); line('J 188,978 287,978', '#008000', 4);
line('J 175,930 190,1080 285,1080', '#a07000', 8); line('J 190,1080 285,1080', '#f0d800', 5);
line('J 165,940 195,1180 220,1280 250,1400 285,1522', '#3fa83f', 2);
line('J 170,840 230,1040 285,1200', '#5267b8', 2);
line('A 385,405 590,640 645,630 665,595 845,712 870,685 925,718 945,710 1255,893 1280,875 1305,895 K 14,300 45,262 75,310 105,405 168,335 230,405 262,370 295,378 350,360 470,350 B 660,918 E 770,0 1510,575 J 195,1265 220,1175 250,1255 285,1230', '#1f8f1f', 4, 0.9);

// Candles: sheet, then x, open-close range, high-low range; r/g/b body colour
const candles = {
  A: 'r180,352,360 r208,350,365 g233,335,365 r260,350,375 r285,378,398 g312,385,395 r338,390,398 r362,392,400 r388,390,400 g412,362,398 g440,352,360 g465,352,360 g490,308,355 r514,308,338 r541,362,408 r566,450,505 r592,503,620,503,640 g617,612,620,590,630 g643,585,615 g668,547,587 r695,545,555,530,560 g719,543,558,535,570 g745,517,545,510,550 r770,515,563 r797,562,590,548,620 r821,587,680 g848,677,681,655,710 g873,652,680,615,690 r900,652,685,625,710 r924,685,705,655,720 g948,645,705 r975,645,655,630,670 g999,602,655 r1026,600,648 r1050,648,705,640,715 g1076,693,703,693,765 g1102,682,695,665,700 g1128,654,658,635,680 g1152,645,682,615,705 r1180,645,690 r1204,690,748,690,790 r1230,747,795,712,800 r1255,793,833,790,895 r1281,835,863,815,863 g1307,858,862,830,905',
  K: 'r14,168,220,160,305 r42,220,240,195,270 r75,238,318,225,318 r105,315,380,315,403 g136,318,378 g168,318,322,280,335 r198,318,365 g230,352,366,340,405 r262,350,355,337,372 g293,310,360,305,375 r323,310,345,300,365 g356,240,345,222,360 r386,240,275,220,300 r419,275,312,238,318 g449,285,312,265,312 g482,255,287,248,287 g512,225,257,218,257 g544,182,225 r574,192,195,180,207 g606,158,183 g637,123,160 b670,122,132,88,132 g700,98,130 g732,80,100 r762,80,92 r791,90,130,85,152 r824,125,129,112,132 g854,116,132,98,132 g887,98,118,90,122 g917,95,99,85,103 r948,92,117',
  B: 'g555,790,808 g580,790,797 r606,790,808,780,812 r632,808,833 r657,835,912 g685,870,912,850,912 r709,869,873,830,873 g735,868,872,855,885 g760,868,872,855,885 g787,843,872 g811,793,843 r838,793,797 r862,795,825,758,825 g887,803,823 r912,805,812 g937,795,810 r965,797,801,775,822 r990,797,803 g1015,797,803 g1040,795,802,780,805 r1065,795,803 g1090,790,808 g1119,770,793 g1143,780,788 g1168,772,787 g1194,770,776 r1220,770,780 g1245,768,782 g1272,758,770 g1297,762,766,750,775 g1323,755,765 g1348,748,758 g1374,717,752 g1398,685,717',
  J: 'g63,389,393,365,400 g95,391,395,365,402 r125,390,548,390,700 r158,548,1082 r188,1080,1163,1080,1248 r221,1163,1173,1068,1250 g251,1163,1165,1163,1250 g285,1117,1170,1117,1240'
};
const body = { r: '#eb4d5c', g: '#53b987', b: '#00e' };
for (const s in candles) {
  candles[s].split(' ').forEach(c => {
    const [x, o, cl, h, l] = c.slice(1).split(',').map(Number);
    const [px, py] = at(s, x, o), py2 = at(s, x, cl)[1];
    if (h) line(`P ${px},${at(s, x, h)[1]} ${px},${at(s, x, l)[1]}`, '#000', 1.2);
    rect(px - 3.5, py, 7.5, Math.max(1.5, py2 - py), body[c[0]]);
  });
}
const dots = (s, list, fill) => list.split(' ').forEach(p => diamond(...at(s, ...p.split(',').map(Number)), fill));
dots('A', '158,408 183,398 209,392 262,404 285,430 312,432 338,428 362,432 388,436 592,665 617,656 643,659 668,620 821,732 848,742 873,705 900,735 924,745 948,738 1255,923 1281,900 1307,922', '#2233dd');
dots('K', '14,328 42,288 75,342 105,428 136,404 168,360 198,394 230,430 262,394 293,407 323,394', '#2344c4');
dots('B', '657,942 685,950', '#2344c4');
dots('J', '158,1127 221,1213 287,1255', '#2344dd');
dots('B', '199,843 224,843 250,825 275,785 302,754 326,765 352,738 377,741 402,747 428,780 480,757 504,748 531,757 862,755 937,760 963,760 990,760 1015,763 1040,755 1065,768 1090,763 1119,748 1143,748 1168,746 1194,738 1220,746 1245,735 1272,720 1297,725 1323,720 1398,656 1423,632 1450,636', '#f33');

// Flag labels
function flag(x1, x2, y1, y2, fill, letters, cols, ink = '#111', up = true) {
  rect(x1, y1, x2 - x1, y2 - y1, fill);
  const step = 10.4, mid = (x1 + x2) / 2 - (cols - 1) * step / 2;
  for (let i = 0; i < cols; i++) {
    const x = mid + i * step, y = up ? y1 : y2;
    el('path', { d: up ? `M${x - 3} ${y}l3-4 3 4z` : `M${x - 3} ${y}l3 4 3-4z`, fill, stroke: 'none' });
    [...letters].forEach((c, k) => text(x + (k ? 2 : 0), y1 + 13 + k * 13, c, ink, 14, 'middle'));
  }
}
[[56, 75, 1], [107, 137.5, 2], [139, 168.5, 2], [232.5, 252, 1], [326, 356.5, 2], [368, 388, 1], [503, 522.5, 1], [535, 555, 1], [556, 585, 2], [608, 627.5, 1], [910, 930, 1], [1253, 1273, 1]].forEach(([a, b, n]) => flag(a, b, 514, 570, '#808000', 'DTC', n));
flag(585, 606.5, 514, 570, '#000080', 'DSi', 2, '#fff');
flag(1274, 1294, 514, 570, '#04304e', 'DSi', 1, '#9fe');
[[712, 762.5, 4], [836.5, 856, 1], [1024.5, 1044.5, 1], [1087, 1107, 1], [1118, 1138, 1]].forEach(([a, b, n]) => flag(a, b, 136, 191, '#f00', 'DTC', n, '#400', false));
flag(1202, 1231, 136, 205, '#f0f', 'DTC N', 2, '#404', false);
line('P 62,522 1796,522', '#45c092', 2, 1, '10 12').setAttribute('stroke-dashoffset', '-6');
line('P 62,428.7 1793,433', '#000', 3);

const marks = (xs, y, fill) => xs.forEach(x => {
  el('path', { d: `M${x - 2.5} ${y - 3}h5.5v4h-2.5v3h-3z`, fill, 'fill-opacity': 0.5, stroke: fill, 'stroke-width': 1 });
});
const bx = (s, list) => list.split(' ').map(v => at(s, +v, 0)[0]);
const redX = bx('B', '199 224 250 275 302 326 352 377 402 428 480 504 531 862 937 963 990 1015 1040 1065 1090 1119 1143 1168 1194 1220 1245 1272 1297 1323 1398 1423 1450');
marks(redX, 131, '#f66');
marks(bx('D', '158 312 336 362 388 592 617 643 848 1408 1434'), 572, '#4bb04b');
[1253, 1262.5, 1273, 1284, 1294.5].forEach(x => el('circle', { cx: x, cy: 572.5, r: 2.5, fill: '#0080007a', stroke: '#4a4' }));

// Text marks in the price pane
[[105, 144], [178, 144], [470, 244], [844, 278], [949, 311]].forEach(([x, y]) => {
  text(x, y, 'I', '#3fa04f', 12, 'middle'); text(x, y + 11, 'FB', '#3fa04f', 13, 'middle', 0.85);
  text(x + 1, y + 23, 'U', '#3fa04f', 13, 'middle', 0.85); text(x + 1, y + 35, 'Y', '#3fa04f', 13, 'middle', 0.85);
});
const mag = (x, y, s, o = 0.65) => text(x, y, s, '#f0c', 13, 'middle', o);
text(575, 300, 'OVER', '#f04ee8', 13, 'middle'); text(576, 312, 'SOLD', '#c08060', 13, 'middle', 0.5); text(576, 324, '×', '#d3d', 13, 'middle');
mag(1276, 425, 'OVER', 0.4); mag(1284, 439, 'SOLD'); mag(1295, 439, 'OVER'); mag(1285, 453, 'OVER'); mag(1296, 452, 'SOLD'); mag(1285, 467, 'SOLD'); mag(1284, 480, '×');

// Oscillator pane
rect(64, 661, 1231, 60, '#800080', 0.1);
line('P 62,616 1796,616', '#e02020', 2, 1, '4 2'); line('P 62,616 1295,616', '#f33', 1);
line('G 155,185 I 40,185', '#53ace2', 4); line('G 155,362 I 40,362', '#53ace2', 4);
line('G 155,498 I 38,498', '#77bcd6', 2);
line('P 62,691 1796,691', '#000', 2, 1, '4 2');
line('P 62,737 1796,737', '#008000', 4, 1, '8 4');
line('G 155,435 183,440 210,445 235,420 262,420 310,465 390,455 420,430 450,360 480,250 500,210 515,192 540,198 560,250 600,370 620,460 640,468 670,450 740,400 770,370 810,390 850,445 920,430 975,440 1000,390 1025,310 1050,330 1100,380 1130,380 1160,330 1180,285 1230,300 1280,420 1350,435 1568,440 H 20,440 60,370 130,280 180,170 220,100 270,60 330,65 400,80 450,115 530,125 580,180 620,240 650,330 680,380 720,400 770,360 820,230 870,170 920,150 960,120 1040,90 1100,120 1180,90 1240,115 1300,135 1350,140 1470,110 1500,190 1560,400', '#f08a3c', 1);
line('G 155,245 250,262 330,280 400,285 520,278 620,305 740,332 860,345 1000,343 1100,332 1190,322 1260,335 1320,350 1400,375 1480,388 1568,380 H 45,375 150,343 240,302 370,255 500,238 600,243 690,262 760,275 900,275 1000,258 1150,245 1330,228 1450,203 1500,240 M 250,225 348,287', '#2a80e0', 3);
line('G 170,245 250,260 400,278 450,285 490,265 540,272 620,320 670,332 780,325 840,335 920,350 960,342 1060,335 1130,325 1190,315 1240,335 1330,350 1400,368 1480,388 1568,372 H 45,358 150,335 260,290 380,250 500,236 590,240 650,262 720,270 860,278 1000,250 1180,240 1330,225 1400,205 1450,195 M 200,200 250,265 300,305 348,325', '#f57c1f', 3);
const osc = 'G 158,462 183,432 210,430 235,410 262,432 285,447 312,470 336,463 362,453 388,462 412,400 450,270 490,155 515,180 540,240 566,380 592,470 617,470 643,458 668,425 695,398 720,378 745,365 780,380 820,440 848,453 873,442 924,448 948,425 975,395 999,320 1026,325 1050,355 1076,398 1102,400 1152,288 1180,275 1204,292 1255,405 1281,435 1370,430 1410,468 1434,468 1486,440 1535,455 1568,425 H 20,395 45,340 96,280 121,280 147,240 172,150 199,85 224,60 275,52 302,70 352,78 377,65 428,122 452,145 504,112 556,140 606,200 632,280 657,410 685,430 709,398 735,345 760,342 787,310 811,235 838,170 862,135 912,150 937,120 990,92 1040,110 1080,135 1120,98 1168,85 1210,102 1270,133 1323,133 1348,160 1390,128 1423,95 1450,105 M 158,80 190,240 230,390 M 270,410 348,400';
line(osc, '#4a3cff', 4, 0.85);
line(osc, '#ff8c2a', 4, 0.85, '24 38');
line('G 158,498 183,462 210,498 235,380 262,498 285,495 312,455 362,498 388,478 412,342 436,335 462,325 490,185 515,360 540,498 592,498 617,490 643,445 668,350 695,360 745,285 770,330 797,360 821,420 848,445 873,400 924,450 948,335 975,340 999,250 1050,370 1076,350 1128,330 1152,258 1190,255 1230,350 1281,475 1333,498 1408,498 1434,362 1460,350 1500,370 1535,360 1560,245 H 20,290 45,60 96,155 147,50 350,50 377,70 404,130 430,125 480,85 504,78 530,110 585,105 632,200 657,370 685,285 709,360 735,355 760,355 787,280 811,130 838,170 862,230 887,195 912,205 937,155 965,153 990,175 1015,182 1040,155 1065,148 1090,80 1119,50 1143,115 1194,50 1220,125 1245,70 1272,50 1297,82 1323,50 1450,50 M 160,20 188,467 310,467 345,420', '#ee3cee', 1.5);
line('G 158,432 183,402 210,450 235,345 262,495 285,490 312,425 362,465 388,445 412,155 434,65 450,48 488,50 515,280 540,470 617,475 643,440 668,375 695,395 745,350 821,495 848,480 873,445 924,498 948,200 975,150 999,50 1050,510 1076,300 1128,195 1152,40 1204,340 1230,465 1255,380 1281,455 1307,450 1333,390 1385,498 1434,365 1460,365 1486,440 1510,395 1568,400 H 20,320 45,40 96,210 121,75 147,50 275,50 302,110 326,62 377,70 404,160 430,180 452,145 480,135 504,135 556,280 582,465 606,498 657,498 685,345 735,335 760,328 787,250 811,75 838,82 862,150 887,82 912,88 937,50 965,50 990,68 1015,68 1040,100 1065,140 1090,60 1119,50 1143,165 1168,108 1194,105 1220,280 1245,340 1272,310 1297,430 1323,320 1348,510 1374,130 1398,50 M 158,20 187,467 220,467 290,330 348,300', '#8a8a20', 1.8, 0.75);
const sig = 'G 158,272 183,267 210,280 235,255 262,290 285,300 312,290 362,303 388,295 412,265 462,262 490,228 515,280 540,325 592,382 617,378 668,332 695,335 720,328 745,310 800,350 850,370 873,347 924,367 948,328 975,330 999,297 1050,335 1102,322 1130,320 1152,297 1230,355 1281,375 1307,372 1357,398 1410,408 1434,378 1460,380 1486,388 1535,382 1568,340 H 45,297 96,325 147,290 199,263 224,262 275,235 302,240 352,220 377,225 404,255 480,237 504,235 582,240 632,280 657,323 685,293 770,292 811,235 862,260 937,243 1065,250 1119,228 1143,245 1194,228 1220,240 1272,220 1297,228 1348,215 1390,165 1450,160 M 158,135 175,250 210,375 280,420 348,390';
line(sig, '#168035', 3.5, 0.85); line(sig, '#f0283c', 3.5, 0.85, '22 34');

const vlabel = (x1, x2, y1, y2, fill, str, ink, gap = 13.5) => {
  el('rect', { x: x1, y: y1, width: x2 - x1, height: y2 - y1, fill, stroke: '#0003', opacity: 0.82 });
  [...str].forEach((c, i) => text((x1 + x2) / 2 + (i % 2 ? 1 : 0), y1 + 12 + i * gap, c, ink, 13, 'middle'));
};
vlabel(326, 346, 699, 755, '#3c4a3c', 'BuyN', '#000'); vlabel(640, 658, 699, 755, '#3c4a3c', 'BuyN', '#000');
vlabel(793, 816, 629, 698, '#ff3540', 'SELL ', '#611'); vlabel(845, 869, 629, 698, '#ff3540', 'SELL ', '#611'); vlabel(1064, 1088, 629, 698, '#ff3540', 'SELL ', '#611');
[805, 857, 1076].forEach(x => { text(x, 694, 'Nn', '#300', 13, 'middle'); el('path', { d: `M${x - 3} 698l3 4 3-4z`, fill: '#f44', stroke: 'none' }); });
vlabel(994, 1011, 629, 684, '#2c2430', 'SELL', '#ddd'); vlabel(1203, 1220, 629, 684, '#2c2430', 'SELL', '#43f');
vlabel(531, 620.5, 686, 755, '#33883a', '', '#111'); vlabel(1208, 1297, 686, 755, '#228b22', '', '#111'); vlabel(1218, 1308, 686, 755, '#3a9a3a', '', '#111');
text(576, 698, 'PREPARE TO', '#1b3b1b', 13, 'middle'); text(1252, 698, 'PREPARE TO', '#1b3b1b', 13, 'middle'); text(1262, 698, 'PREPARE TO', '#1b3b1b', 13, 'middle');
[576, 1253, 1263.5].forEach(x => [...'BuyN'].forEach((c, i) => text(x, 711 + i * 13.5, c, '#1b3b1b', 13, 'middle')));

// Volume pane
const tone = { x: '#9a9a9a', m: '#f43df0', u: '#3030f5', k: '#a8a588', s: '#7790b8', l: '#a6cfa6', p: '#6f6fc0' };
const vols = {
  G: 'u160,745 u362,758 u388,758 l462,742 l488,737 l514,726 x540,692 x566,688 x592,692 x617,708 x643,712 m668,715 u695,735 u720,738 u745,738 k770,742 s797,740 x821,702 s848,722 s873,715 p900,720 x924,735 k948,735 k975,740 l999,712 l1024,710 s1050,715 p1076,710 k1102,715 m1128,702 s1152,706 s1180,708 x1204,696 x1230,705 x1255,696 x1281,697 x1307,708 x1332,678 x1357,697 p1383,710 x1408,655 x1434,692 u1460,700 k1486,715 k1512,725 k1537,725 k1562,722',
  H: 'k20,720 s45,697 k70,708 s96,698 k121,722 k147,724 k172,722 s199,700 k224,706 k250,724 k275,724 k302,738 k326,738 k352,742 k377,745 k402,745 k428,745 s657,742 s709,745 u811,755 u912,755 u963,760 l1271,750 l1348,740 l1374,738 l1398,736 l1423,727 l1449,720 x1475,642 x1500,545 x1525,620',
  M: 'x280,650 x311,650 u345,665'
};
for (const s in vols) vols[s].split(' ').forEach(v => {
  const [x, y] = at(s, ...v.slice(1).split(',').map(Number));
  rect(x - 4.5, y, 9.5, 856 - y, tone[v[0]], 0.9);
});
const vma = 'G 155,758 480,762 560,748 650,732 740,732 860,728 1000,722 1150,714 1260,708 1400,697 1568,703 H 100,705 200,710 370,728 480,738 600,747 780,750 950,752 1250,758 1380,750 1450,742 M 240,680 340,670';
area(vma, 'P 64,856 1294,856', '#3a3aff66');
line(vma, '#e0304a', 1.5);
line('G 155,740 390,742 560,735 1568,733', '#d2323a', 1); line('H 0,733 1450,740 M 340,700', '#f09030', 1);
line('G 155,745 480,742 650,740 1568,735 H 0,733 600,734 1450,736 M 340,702', '#20205c', 1.5);
line('P 62,857 1232,857', '#d21a10', 4); line('P 1232,857 1296,857', '#1a7a2a', 4);
marks(bx('G', '160 312 336 362 388 592 617 643 848'), 849, '#2a8a4a');
marks(redX, 790, '#f55');
redX.forEach(x => diamond(x, 848, '#f22'));
[[377, '#00007a'], [575, '#7a2a7a'], [585, '#064a3a'], [596, '#00007a'], [1252, '#4a6a7a'], [1263, '#a2a'], [1273, '#b2b'], [1284, '#406']].forEach(([x, c]) => el('circle', { cx: x, cy: 849, r: 3, fill: c, stroke: 'none' }));
[731, 742, 752, 773, 784, 836, 1023, 1065, 1086, 1096, 1117, 1127].forEach(x => el('path', { d: `M${x - 2.5} 787l5 6M${x + 2.5} 787l-5 6`, stroke: '#f01010', 'stroke-width': 3 }));
[575, 846, 1263, 1273.5, 1284, 1294.5].forEach(x => el('path', { d: `M${x - 2.5} 787l5 6M${x + 2.5} 787l-5 6`, stroke: '#f04ee8', 'stroke-width': 2 }));
[731, 742, 752, 773, 784, 836, 846, 1023, 1065, 1086, 1096, 1117, 1127].forEach(x => text(x, 820, 'silly', '#e02020', 13, 'middle'));
text(846, 806, 'P', '#f04ee8', 13, 'middle'); text(847, 833, 'r', '#f04ee8', 13, 'middle'); text(846, 860, 'e', '#f04ee8', 13, 'middle');
text(575, 807, 'FUCK BUY', '#f04ee8', 13, 'middle'); text(575, 827, 'OVER', '#f04ee8', 13, 'middle', 0.9); text(575, 841, 'SOLD', '#e04090', 13, 'middle', 0.6);
[1262, 1273, 1283.5, 1294].forEach(x => { mag(x, 807, 'FUCK BUY'); mag(x, 827, 'OVER'); mag(x, 841, 'SOLD'); });

// Pane borders and scales
line('P 62,606.5 1864,606.5', '#444'); line('P 62,775.5 1864,775.5', '#444'); line('P 62,861.5 1864,861.5', '#444');
line('P 1796.5,97 1796.5,890', '#555');
[[130, '1.14200'], [191, '1.14000'], [251, '1.13800'], [312, '1.13600'], [372, '1.13400'], [433, '1.13200'], [494, '1.13000'], [555, '1.12800'], [616, '100.0000'], [653, '75.0000'], [691, '50.0000'], [728, '25.0000'], [766, '0.0000'], [813, '10K'], [856, '0']].forEach(([y, s]) => {
  line(`P 1796,${y}.5 1801,${y}.5`, '#555'); text(1805, y + 5, s, '#555', 12);
});
hours.forEach(([x, s]) => {
  line(`P ${x}.5,861 ${x}.5,865`, '#555');
  text(x, 882, s, '#555', 12, 'middle').setAttribute('font-weight', s === '24' ? 700 : 400);
});
rect(1796, 293, 61, 18, '#e85b5b'); text(1805, 306, '1.13634', '#fff', 12);
rect(1796, 459, 61, 18, '#000'); text(1805, 472, '1.13084', '#fff', 12);
rect(1814, 479, 43, 18, '#000'); text(1818, 492, '02:03', '#fff', 12);
line('P 1796,302 1801,302', '#fff'); line('P 1796,468 1801,468', '#fff');
el('circle', { cx: 1828, cy: 876, r: 5, stroke: '#222', fill: 'none', 'stroke-width': 1.3 });
for (let a = 0; a < 8; a++) el('path', { d: 'M1828 868.5v2.5', stroke: '#222', transform: `rotate(${a * 45} 1828 876)` });
el('circle', { cx: 1781, cy: 116, r: 8, stroke: '#f08a3c', fill: '#fff', 'stroke-width': 1.5 });
text(1781, 121, '!', '#f08a3c', 14, 'middle');

// Open position
el('rect', { x: 1567.5, y: 291.5, width: 142, height: 22, fill: '#fff', stroke: '#e57373' });
rect(1615, 291, 51, 23, '#e85b5b');
line('P 1687.5,291 1687.5,313', '#e57373');
const serif = (x, s, c) => { const t = text(x, 306, s, c, 10); t.setAttribute('font-family', 'Liberation Serif, serif'); t.setAttribute('font-weight', 700); };
serif(1574, '3 026.03', '#2a8a1a'); serif(1623, '-550 000', '#fff');
el('path', { d: 'M1673.5 308v-11l-2 3M1673.5 297l2 3M1679.5 296v12l-2-3M1679.5 308l2-3M1693 297l10 11M1703 297l-10 11', stroke: '#d44', fill: 'none' });

// Economic events
function usFlag(x, ring) {
  el('circle', { cx: x, cy: 591, r: 12, fill: '#fff', stroke: ring, 'stroke-width': 1.5 });
  const clip = `c${x}`;
  const cp = el('clipPath', { id: clip });
  const c = document.createElementNS(NS, 'circle');
  c.setAttribute('cx', x); c.setAttribute('cy', 591); c.setAttribute('r', 9); cp.appendChild(c);
  [583, 590, 597].forEach(y => rect(x - 9, y, 18, 4, '#e0525f').setAttribute('clip-path', `url(#${clip})`));
  rect(x - 9, 582, 10, 10, '#3f7fd0').setAttribute('clip-path', `url(#${clip})`);
}
usFlag(1484, '#e8485f'); usFlag(1473, '#f0962e'); usFlag(1650, '#f0962e'); usFlag(1691, '#f5c242');
rect(1478, 577, 19, 12, '#fff'); rect(1697, 577, 10, 12, '#fff');
text(1479, 587, '3 4', '#111', 12); text(1698, 587, '6', '#111', 12);

// Legends
el('rect', { x: 77, y: 112, width: 11, height: 11, fill: 'none', stroke: '#555' });
line('P 79,117.5 86,117.5', '#555');
text(101, 123, 'Euro / U.S. Dollar, 15, FXCM', '#555', 19);
[[388, 'O', '1.13024'], [485, 'H', '1.13086'], [582, 'L', '1.12958'], [674, 'C', '1.13084']].forEach(([x, k, v]) => {
  text(x, 123, k, '#555', 19); text(x + (k === 'L' ? 11 : 14), 123, v, '#53b987', 19);
});
text(770, 123, '+0.00060 (+0.05%)', '#53b987', 19);
line('P 349,115.5 353,119.5 357,115.5', '#333', 1.5);
function legend(y, name, cx, bx0) {
  text(75, y, name, '#555', 14);
  line(`P ${cx},${y - 6} ${cx + 4},${y - 2} ${cx + 8},${y - 6}`, '#333', 1.5);
  for (let i = 0; i < 4; i++) {
    const x = bx0 + i * 19, m = y - 4.5;
    el('rect', { x, y: y - 12, width: 16, height: 15, rx: 2, fill: '#b5b6bd', stroke: 'none', opacity: 0.85 });
    if (i === 0 || i === 1) el('circle', { cx: x + 8, cy: m, r: i ? 3.5 : 4.5, fill: 'none', stroke: '#fff', 'stroke-width': i ? 3 : 1.5, 'stroke-dasharray': i ? '2 .7' : '' });
    if (i === 0) el('circle', { cx: x + 8, cy: m, r: 1.5, fill: '#fff', stroke: 'none' });
    if (i === 2) text(x + 8, y, '{}', '#fff', 12, 'middle');
    if (i === 3) el('path', { d: `M${x + 4} ${m - 4}l8 8M${x + 12} ${m - 4}l-8 8`, stroke: '#fff', 'stroke-width': 2 });
  }
}
legend(148, 'SamFucker 5', 176, 196);
legend(630, 'SrSlv170', 138, 158);
legend(799, 'SamFUckerVol', 174, 194);
```
